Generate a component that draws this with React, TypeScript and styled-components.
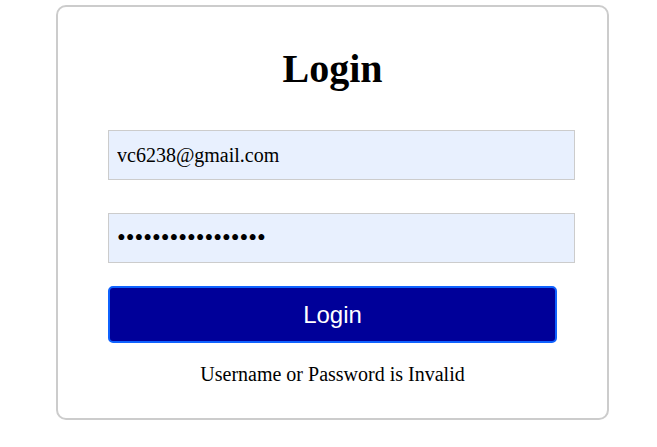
import React, { useState } from 'react';
import styled, { createGlobalStyle } from 'styled-components';

const GlobalStyle = createGlobalStyle`
    html, body {
        margin: 0;
        padding: 0;
        background: #ffffff;
    }
    body {
        font-family: 'Liberation Serif', 'Times New Roman', serif;
        color: #000000;
    }
`;

const Page = styled.div`
    padding: 5px 0 0 56px;
`;

const Card = styled.form`
    width: 449px;
    padding: 40px 50px 32px;
    border: 2px solid #cccccc;
    border-radius: 10px;
    display: flex;
    flex-direction: column;
`;

const Title = styled.h1`
    margin: 0 0 39px;
    font-size: 40px;
    font-weight: bold;
    text-align: center;
    line-height: 44px;
`;

const Field = styled.input<{ $gap: number; $size: number }>`
    width: 449px;
    height: 48px;
    padding: 0 8px;
    margin: 0 0 ${(p) => p.$gap}px;
    border: 1px solid #cccccc;
    background: #e8f0fe;
    font-family: 'Liberation Serif', 'Times New Roman', serif;
    font-size: ${(p) => p.$size}px;
    color: #000000;
    box-sizing: content-box;
    outline: none;
`;

const SubmitButton = styled.button`
    height: 57px;
    border: 2px solid #0f62fe;
    border-radius: 5px;
    background: #000099;
    color: #ffffff;
    font-family: 'Liberation Sans', Arial, sans-serif;
    font-size: 24px;
    cursor: pointer;
`;

const ErrorText = styled.p`
    margin: 20px 0 0;
    text-align: center;
    font-size: 20px;
    line-height: 23px;
`;

export default function App() {
    const [email, setEmail] = useState('vc6238@gmail.com');
    const [password, setPassword] = useState('abcdefghijklmnopq');

    return (
        <Page>
            <GlobalStyle />
            <Card onSubmit={(e) => e.preventDefault()}>
                <Title>Login</Title>
                <Field $gap={33} $size={20} type='text' value={email} onChange={(e) => setEmail(e.target.value)} />
                <Field $gap={23} $size={25} type='password' value={password} onChange={(e) => setPassword(e.target.value)} />
                <SubmitButton type='submit'>Login</SubmitButton>
                <ErrorText>Username or Password is Invalid</ErrorText>
            </Card>
        </Page>
    );
}
